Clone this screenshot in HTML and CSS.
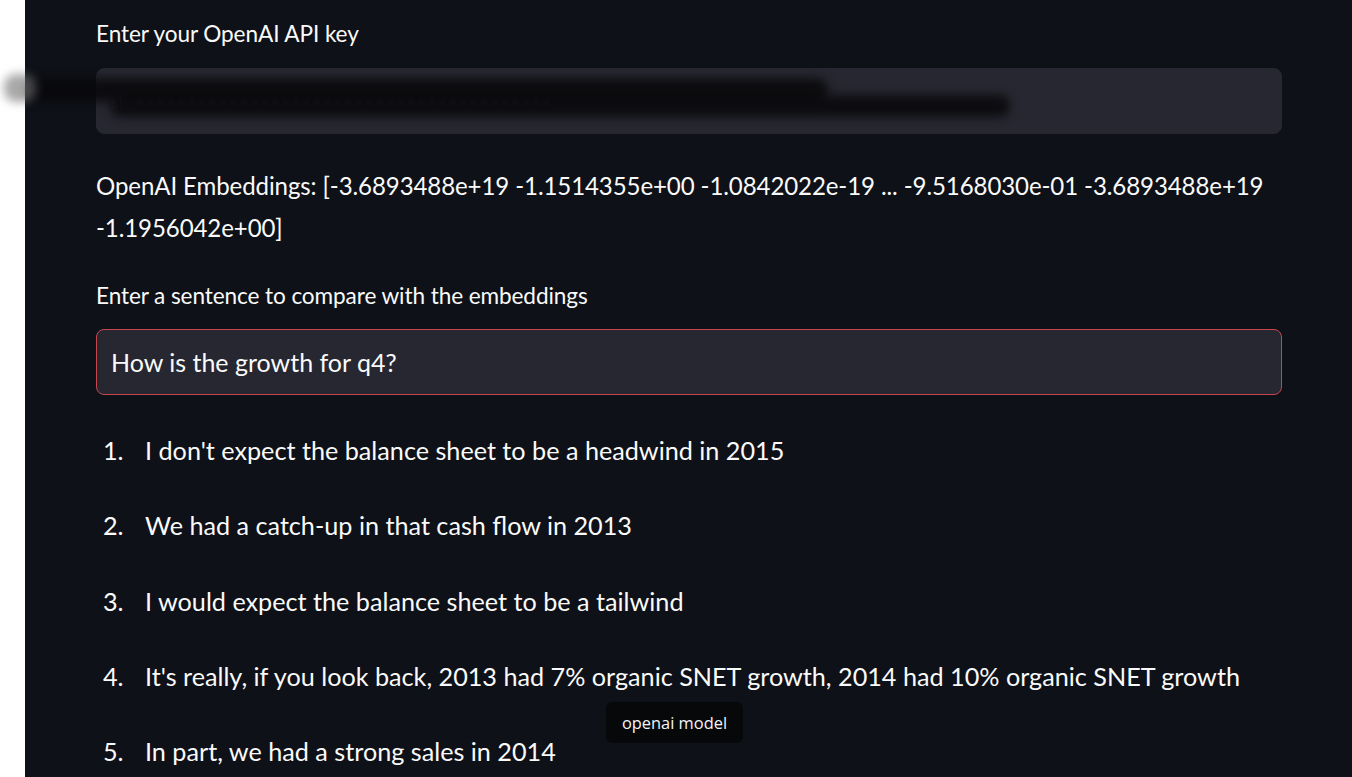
FILE: index.html
```html
<!DOCTYPE html>
<html>
<head>
<meta charset="utf-8">
<link rel="stylesheet" href="styles.css">
</head>
<body>
<div class="page">
  <div class="strip"></div>
  <main class="main">
    <div class="block">
      <label class="label">Enter your OpenAI API key</label>
      <div class="input input-key"><span class="key-text">sk-••••••••••••••••••••••••••••••••••••••••</span></div>
    </div>
    <p class="embed">OpenAI Embeddings: [-3.6893488e+19 -1.1514355e+00 -1.0842022e-19 ... -9.5168030e-01 -3.6893488e+19 -1.1956042e+00]</p>
    <div class="block">
      <label class="label">Enter a sentence to compare with the embeddings</label>
      <div class="input input-focus">How is the growth for q4?</div>
    </div>
    <ol class="results">
      <li>I don't expect the balance sheet to be a headwind in 2015</li>
      <li>We had a catch-up in that cash flow in 2013</li>
      <li>I would expect the balance sheet to be a tailwind</li>
      <li>It's really, if you look back, 2013 had 7% organic SNET growth, 2014 had 10% organic SNET growth</li>
      <li>In part, we had a strong sales in 2014</li>
    </ol>
  </main>
  <div class="smear smear-a"></div>
  <div class="smear smear-b"></div>
  <div class="smear smear-c"></div>
  <div class="tooltip">openai model</div>
</div>
</body>
</html>
```
FILE: styles.css
```css
html, body {
  margin: 0;
  padding: 0;
  background: #ffffff;
  overflow: hidden;
}
.page {
  position: relative;
  display: flex;
  width: 1352px;
  height: 777px;
  overflow: hidden;
}
.strip {
  width: 25px;
  flex: 0 0 25px;
  background: #ffffff;
}
.main {
  flex: 1;
  background: #0e1117;
  color: #fafafa;
  font-family: "Lato", "Source Sans Pro", sans-serif;
  padding: 18px 70px 0 71px;
}
.block {
  display: flex;
  flex-direction: column;
}
.label {
  font-size: 22.6px;
  line-height: 32px;
  height: 32px;
  margin-bottom: 18px;
  letter-spacing: -0.1px;
}
.input {
  height: 66px;
  box-sizing: border-box;
  background: #262730;
  border-radius: 8px;
  display: flex;
  align-items: center;
  padding: 0 14px;
  font-size: 25px;
  color: #fafafa;
  border: 1px solid #262730;
}
.key-text {
  color: #3a3b44;
  font-size: 18px;
}
.input-focus {
  border: 1px solid #c8464e;
}
.embed {
  margin: 31px 0 0 0;
  font-size: 24.05px;
  line-height: 42px;
  letter-spacing: -0.1px;
}
.embed + .block {
  margin-top: 31px;
}
.embed + .block .label {
  margin-bottom: 17px;
}
.results {
  list-style: none;
  counter-reset: item;
  margin: 34px 0 0 0;
  padding: 0 0 0 7px;
  font-size: 25.2px;
  line-height: 42px;
}
.results li {
  counter-increment: item;
  display: flex;
  margin-bottom: 33.25px;
}
.results li::before {
  content: counter(item) ".";
  flex: 0 0 42px;
  width: 42px;
}
.smear {
  position: absolute;
  background: rgba(8, 8, 10, 0.85);
  filter: blur(5px);
  border-radius: 12px;
}
.smear-a {
  left: 28px;
  top: 78px;
  width: 800px;
  height: 24px;
}
.smear-b {
  left: 110px;
  top: 95px;
  width: 900px;
  height: 22px;
}
.smear-c {
  left: 4px;
  top: 74px;
  width: 32px;
  height: 28px;
  background: rgba(110, 110, 110, 0.6);
  filter: blur(5px);
}
.tooltip {
  position: absolute;
  left: 606px;
  top: 702px;
  width: 137px;
  height: 41px;
  box-sizing: border-box;
  background: #07080a;
  border-radius: 6px;
  color: #f5f5f5;
  font-family: "Open Sans", "Noto Sans", sans-serif;
  font-size: 16.4px;
  display: flex;
  align-items: center;
  justify-content: center;
}
```
